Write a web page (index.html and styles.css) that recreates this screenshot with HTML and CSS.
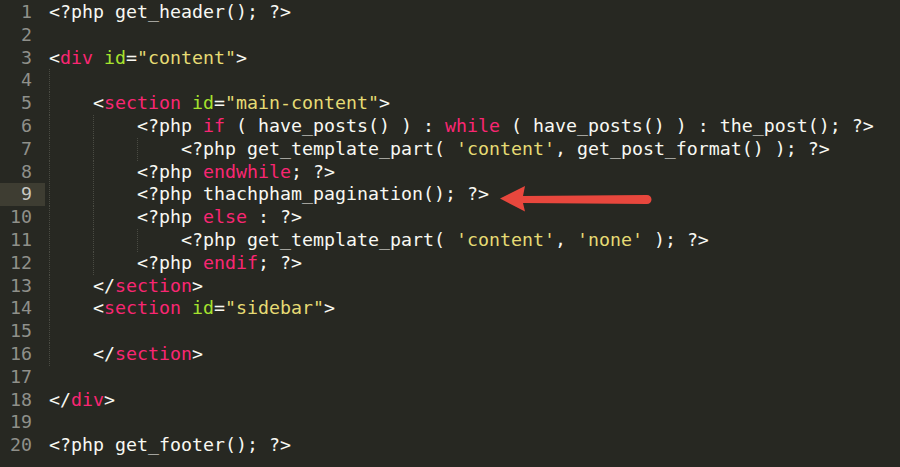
FILE: index.html
```html
<!DOCTYPE html>
<html lang="en">
<head>
<meta charset="utf-8">
<title>Editor</title>
<link rel="stylesheet" href="styles.css">
</head>
<body>
<div class="editor">
  <div class="row"><div class="num">1</div><div class="code"><span class="t">&lt;?php get_header(); ?&gt;</span></div></div>
  <div class="row"><div class="num">2</div><div class="code"></div></div>
  <div class="row"><div class="num">3</div><div class="code"><span class="t">&lt;<span class="k">div</span> <span class="a">id</span>=<span class="s">"content"</span>&gt;</span></div></div>
  <div class="row"><div class="num">4</div><div class="code"><span class="ig"></span></div></div>
  <div class="row"><div class="num">5</div><div class="code"><span class="ig"></span><span class="t">&lt;<span class="k">section</span> <span class="a">id</span>=<span class="s">"main-content"</span>&gt;</span></div></div>
  <div class="row"><div class="num">6</div><div class="code"><span class="ig"></span><span class="ig"></span><span class="t">&lt;?php <span class="k">if</span> ( have_posts() ) : <span class="k">while</span> ( have_posts() ) : the_post(); ?&gt;</span></div></div>
  <div class="row"><div class="num">7</div><div class="code"><span class="ig"></span><span class="ig"></span><span class="ig"></span><span class="t">&lt;?php get_template_part( <span class="s">'content'</span>, get_post_format() ); ?&gt;</span></div></div>
  <div class="row"><div class="num">8</div><div class="code"><span class="ig"></span><span class="ig"></span><span class="t">&lt;?php <span class="k">endwhile</span>; ?&gt;</span></div></div>
  <div class="row"><div class="num cur">9</div><div class="code"><span class="ig"></span><span class="ig"></span><span class="t">&lt;?php thachpham_pagination(); ?&gt;</span></div></div>
  <div class="row"><div class="num">10</div><div class="code"><span class="ig"></span><span class="ig"></span><span class="t">&lt;?php <span class="k">else</span> : ?&gt;</span></div></div>
  <div class="row"><div class="num">11</div><div class="code"><span class="ig"></span><span class="ig"></span><span class="ig"></span><span class="t">&lt;?php get_template_part( <span class="s">'content'</span>, <span class="s">'none'</span> ); ?&gt;</span></div></div>
  <div class="row"><div class="num">12</div><div class="code"><span class="ig"></span><span class="ig"></span><span class="t">&lt;?php <span class="k">endif</span>; ?&gt;</span></div></div>
  <div class="row"><div class="num">13</div><div class="code"><span class="ig"></span><span class="t">&lt;/<span class="k">section</span>&gt;</span></div></div>
  <div class="row"><div class="num">14</div><div class="code"><span class="ig"></span><span class="t">&lt;<span class="k">section</span> <span class="a">id</span>=<span class="s">"sidebar"</span>&gt;</span></div></div>
  <div class="row"><div class="num">15</div><div class="code"><span class="ig"></span></div></div>
  <div class="row"><div class="num">16</div><div class="code"><span class="ig"></span><span class="t">&lt;/<span class="k">section</span>&gt;</span></div></div>
  <div class="row"><div class="num">17</div><div class="code"></div></div>
  <div class="row"><div class="num">18</div><div class="code"><span class="t">&lt;/<span class="k">div</span>&gt;</span></div></div>
  <div class="row"><div class="num">19</div><div class="code"></div></div>
  <div class="row"><div class="num">20</div><div class="code"><span class="t">&lt;?php get_footer(); ?&gt;</span></div></div>

  <svg class="arrow" width="165" height="36" viewBox="0 0 165 36" aria-hidden="true">
    <path d="M5,18.5 L30,6 L28,16 L152,15 A4.5,4.5 0 0 1 152,24 L28,23 L30,31.5 Z" fill="#e8473d"/>
  </svg>
</div>
</body>
</html>
```

FILE: styles.css
```css
html, body {
  margin: 0;
  padding: 0;
  background: #272822;
}

body {
  min-height: 100vh;
}

.editor {
  position: relative;
  padding-top: 1px;
  font-family: "DejaVu Sans Mono", "Liberation Mono", monospace;
  font-size: 18.27px;
  line-height: 22.8px;
  color: #f8f8f2;
}

.row {
  display: flex;
  height: 22.8px;
}

.num {
  flex: 0 0 45px;
  box-sizing: border-box;
  padding-right: 13px;
  text-align: right;
  color: #8f908a;
}

.num.cur {
  background: #3e3d32;
  color: #c8c8c2;
}

.code {
  display: flex;
  padding-left: 4px;
  white-space: pre;
}

.ig {
  flex: 0 0 44px;
  height: 22.8px;
  background-image: repeating-linear-gradient(to bottom, #4a4b43 0 1px, transparent 1px 2px);
  background-size: 1px 100%;
  background-repeat: no-repeat;
  background-position: 0 0;
}

.t {
  white-space: pre;
}

.k { color: #f92672; }
.a { color: #a6e22e; }
.s { color: #e6db74; }

.arrow {
  position: absolute;
  left: 495px;
  top: 180px;
}
```
